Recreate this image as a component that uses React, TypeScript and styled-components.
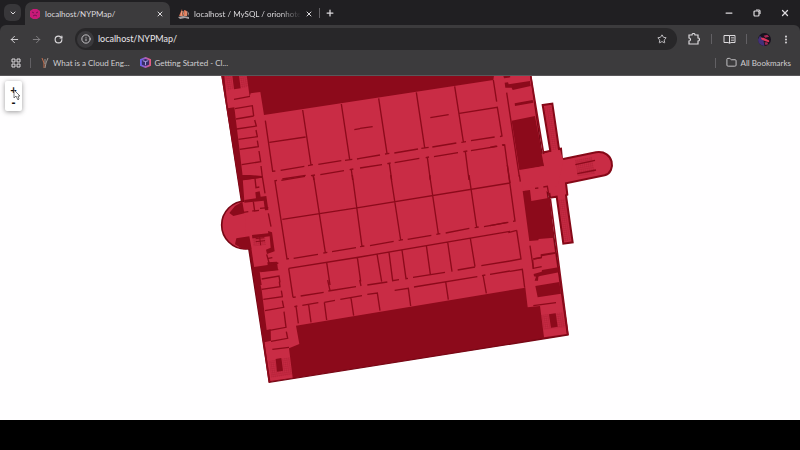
import React from "react";
import styled, { createGlobalStyle } from "styled-components";
import { ArrowLeft, ArrowRight, ChevronDown, Folder, Info, Minus, MoreVertical, Plus, RotateCw, Star, X } from "lucide-react";

const GlobalStyle = createGlobalStyle`
  * { box-sizing: border-box; }
  body { margin: 0; background: #000; font-family: Lato, "Noto Sans", sans-serif; }
  button { font: inherit; border: 0; padding: 0; margin: 0; background: none; color: inherit; }
`;

const Window = styled.div`
  min-height: 100vh;
  display: flex;
  flex-direction: column;
  color: #dcdadd;
`;

const TabStrip = styled.header`
  display: flex;
  align-items: stretch;
  height: 25px;
  padding-left: 4px;
  background: #201f22;
`;

const IconButton = styled.button<{ $size?: number; $dim?: boolean }>`
  flex: none;
  display: flex;
  align-items: center;
  justify-content: center;
  width: ${(p) => p.$size ?? 16}px;
  height: ${(p) => p.$size ?? 16}px;
  color: ${(p) => (p.$dim ? "#858387" : "#dcdadd")};
`;

const TabSearch = styled(IconButton)`
  align-self: center;
  border-radius: 6px;
  background: #38373a;
`;

const Tab = styled.div<{ $active?: boolean }>`
  display: flex;
  align-items: center;
  width: ${(p) => (p.$active ? 145 : 147)}px;
  margin: 2px 0 0 ${(p) => (p.$active ? 4 : 2)}px;
  padding: 0 2px 0 ${(p) => (p.$active ? 4 : 6)}px;
  border-radius: 7px 7px 0 0;
  background: ${(p) => (p.$active ? "#3c3b3d" : "transparent")};
`;

const TabTitle = styled.button<{ $fade?: boolean }>`
  flex: 1;
  min-width: 0;
  margin-left: 4px;
  text-align: left;
  font-size: 8px;
  line-height: 12px;
  white-space: nowrap;
  mask-image: ${(p) => (p.$fade ? "linear-gradient(90deg, #000 80%, transparent)" : "none")};
`;

const Divider = styled.span`
  flex: none;
  align-self: center;
  width: 1px;
  height: 10px;
  background: #626064;
`;

const NewTab = styled(IconButton)`
  align-self: center;
  margin-left: 2px;
`;

const WindowButtons = styled.div`
  display: flex;
  align-items: center;
  gap: 12px;
  margin-left: auto;
  padding-right: 7px;
`;

const ToolbarBack = styled.div`
  background: #201f22;
`;

const Toolbar = styled.div`
  display: flex;
  align-items: center;
  height: 28px;
  padding: 0 9px 0 5px;
  border-radius: 6px 6px 0 0;
  background: #3c3b3d;
`;

const NavButtons = styled.nav`
  display: flex;
  gap: 6px;
  padding-left: 1px;
`;

const AddressBar = styled.div`
  flex: 1;
  display: flex;
  align-items: center;
  height: 22px;
  margin-left: 9px;
  padding: 0 7px 0 2px;
  border-radius: 11px;
  background: #282729;
`;

const SiteInfo = styled(IconButton)`
  border-radius: 50%;
  background: #3a393c;
`;

const Address = styled.input`
  flex: 1;
  min-width: 0;
  margin-left: 4px;
  padding: 0;
  border: 0;
  outline: 0;
  background: none;
  color: #e8e6e9;
  font-family: inherit;
  font-size: 9px;
  line-height: 14px;
`;

const Tools = styled.div`
  display: flex;
  align-items: center;
  gap: 9px;
  padding-left: 9px;
`;

const Bookmarks = styled.div`
  display: flex;
  align-items: center;
  height: 23px;
  padding: 0 9px 3px 8px;
  background: #3c3b3d;
  border-bottom: 1px solid #59575a;
`;

const BookmarkGap = styled.span`
  display: flex;
  margin-left: 6px;
`;

const Bookmark = styled.a`
  display: flex;
  align-items: center;
  gap: 4px;
  margin-left: 10px;
  color: #d0ced1;
  font-size: 8px;
  line-height: 12px;
  white-space: nowrap;
  text-decoration: none;
`;

const BookmarkEnd = styled.div`
  display: flex;
  align-items: center;
  margin-left: auto;
`;

const Page = styled.main`
  position: relative;
  flex: 1;
  overflow: hidden;
  background: #fffeff;
`;

const FloorPlan = styled.svg`
  display: block;
  width: 100%;
  height: auto;
`;

const ZoomBox = styled.div`
  position: absolute;
  top: 5px;
  left: 5px;
  display: flex;
  flex-direction: column;
  width: 17px;
  padding: 2px 0;
  border-radius: 2px;
  background: #fff;
  box-shadow: 0 1px 5px rgba(0, 0, 0, 0.4);
`;

const ZoomButton = styled.button`
  height: 13px;
  color: #111;
  font-family: "DejaVu Sans Mono", monospace;
  font-size: 10px;
  font-weight: 700;
  line-height: 13px;
`;

const Cursor = styled.svg`
  position: absolute;
  top: 13px;
  left: 13px;
  pointer-events: none;
`;

const Taskbar = styled.footer`
  height: 30px;
  background: #000;
`;

const LIGHT = "#c92c45";
const DARK = "#8c0a1b";

const tiles = {
  nw: "translate(645 210)",
  n: "translate(1080 210)",
  ne: "translate(1470 210)",
  w: "translate(645 525)",
  c: "translate(1080 525)",
  e: "translate(1470 525)",
  sw: "translate(645 840)",
  s: "translate(1080 825)",
  se: "translate(1470 780)",
};

const walls: [string, string][] = [
  [tiles.nw, "M57 88L105 79M60 116L112 107L116 138M63 147L116 138M65 177L124 168L119 150M70 208L127 200L123 180M74 238L130 230L127 212M80 284L137 275L132 243M85 328L142 321L138 288M151 152L173 304L181 303M163 217L272 201M263 120L288 285M279 287L294 284M379 102L404 268M197 301L268 289M310 283L379 272M390 271L412 268M426 267L435 265M202 327L272 316M288 317L300 315M316 314L387 302M404 299L415 297M294 317L297 330M409 299L413 330M418 179L435 176"],
  [tiles.n, "M0 175L38 170M56 85L81 250M75 252L88 250M169 67L194 233M184 235L206 232M284 49L310 215M304 217L318 215M400 30L410 95M298 130L412 112L426 198L420 200M211 143L266 134M0 265L60 255M103 249L174 237M217 231L289 219M333 212L404 201M0 294L66 284M104 278L178 265M222 260L294 248M333 242L412 229M82 281L92 279M88 280L95 330M197 263L207 261M202 262L211 330M310 245L322 243M316 244L327 330M428 226L434 225L442 285"],
  [tiles.ne, "M50 68L88 320M162 247L181 243M0 232L20 228M36 225L44 224"],
  [tiles.w, "M178 18L186 16M180 18L216 252L222 251M199 16L270 4M295 0L331 233M325 234L337 232M202 133L435 97M412 0L441 214M435 215L448 213M236 250L309 238M351 230L423 218M221 280L435 246M221 280L234 367M335 262L345 330M427 247L437 320M73 13L142 5L150 55M120 10L123 38L133 36M115 80L119 108L132 106M85 112L100 110M112 108L119 107M135 100L160 98M160 115L168 155M136 290L190 284M140 312L192 303L195 322M155 238L164 270L190 264M160 250L172 248"],
  [tiles.c, "M0 97L450 24M92 0L122 195M116 196L129 194M209 0L235 177M229 178L241 176M327 0L350 157M344 158L356 156M442 -30L450 24M30 212L101 199M143 193L214 181M257 174L328 160M372 155L445 142M0 246L450 169M51 237L65 320M87 232L98 317L117 314M126 225L138 311L144 310M199 211L211 298M159 307L255 292M263 201L276 290M331 190L345 275M293 285L345 276M364 272L450 258M22 330L82 321M366 302L376 300M390 298L450 288"],
  [tiles.e, "M52 -30L75 138L69 139M0 152L52 142M80 166L93 252L60 258M60 289L97 283L104 338M55 173L80 166M120 212L130 280L155 275M130 252L152 248M135 40L145 39M160 36L172 34L177 63M88 0L91 20"],
  [tiles.sw, "M234 52L242 51M257 48L326 37M338 0L345 32M340 33L423 20M434 0L438 18M238 80L247 78M243 78L250 130M262 76L310 68M281 75L288 127M328 67L360 61M328 67L335 120M376 58L441 47M408 54L416 107M140 28L195 20L193 5M145 58L202 50L199 32M150 92L206 82L202 62M160 152L213 142L207 95M168 184L218 175L214 155M172 208L222 202"],
  [tiles.s, "M22 58L52 54L60 107M104 46L145 40L152 93M162 36L352 5M257 20L265 74M369 0L379 55"],
  [tiles.se, "M128 0L130 27M130 137L198 128"],
];

const voids: [string, string][] = [
  [tiles.nw, "M52 17H72L77 55L57 58Z"],
  [tiles.ne, "M40 17H60L61 22L42 25ZM44 38L54 37L56 43L120 33L122 48L68 60L65 53L46 53ZM74 100L128 90L130 98L75 108ZM65 152L135 138L162 288L88 300Z"],
  [tiles.w, "M70 0L105 0L140 3L142 8L75 17ZM88 75L123 70L121 52L134 49L137 65L154 63L160 105L150 106L146 77L88 83ZM43 114L60 93L82 80L88 115L55 123ZM64 190L103 184L110 222L84 223L60 208ZM111 180L160 175L159 168L171 172L179 229L156 237L153 224L167 218L164 184L112 190ZM115 276L158 270L157 262L186 260L189 284L134 290L140 330L122 330Z"],
  [tiles.e, "M98 48L120 45L124 78L180 68L192 188L146 192L145 196L118 198ZM130 250L152 246V238L195 231L197 236L156 244V250L130 254Z"],
  [tiles.se, "M131 42L155 35L156 30L205 22L207 37L150 48L145 50L144 62L134 62L138 50L132 49ZM136 78L208 66L213 101L143 112Z"],
];

const stairs: [string, string][] = [
  [tiles.nw, "M29 17H50L56 56L37 62ZM73 17H94L100 50L79 55Z"],
  [tiles.ne, "M163 110L183 107L204 238L183 241ZM255 270L305 261L315 311L263 319Z"],
  [tiles.e, "M204 75L228 70L244 195L222 201Z"],
  [tiles.w, "M112 186L150 183L153 210L115 214Z"],
  [tiles.sw, "M162 243L225 232L231 284L169 293Z"],
  [tiles.se, "M153 165L218 157L226 202L160 210Z"],
];

function Building() {
  return (
    <FloorPlan viewBox="0 228 2400 1032" role="img" aria-label="Floor plan">
      <defs>
        <pattern id="steps" width="6" height="6" patternUnits="userSpaceOnUse" patternTransform="rotate(-9)">
          <path d="M0 1H6M2 0V6" stroke={DARK} strokeWidth="1" opacity="0.6" />
        </pattern>
      </defs>
      <path d="M666 226L808 1147L1704 1005L1592 226Z" fill={DARK} stroke="#780715" strokeWidth="4" />
      <circle cx="737" cy="675" r="72" fill={LIGHT} stroke="#780715" strokeWidth="5" />
      <path
        transform={tiles.ne}
        d="M158 105L187 101L207 237L213 236L216 268L318 247C372 239 380 306 344 316L228 340L232 374L228 376L248 517L220 521L200 380L180 383L160 247L181 243Z"
        fill={LIGHT}
        stroke="#850817"
        strokeWidth="6"
      />
      <path
        d="M673 226L683 325L703 322L727 520L733 604L740 745L752 747L762 804L772 812L785 870L800 990L812 988L813 1022L793 1027L811 1143L878 1133L867 1045L898 1032L888 977L1576 863L1583 922L1620 918L1632 1012L1700 1002L1590 226H1482L1480 240L792 345L781 276L752 280L749 290L740 226Z"
        fill={LIGHT}
      />
      {voids.map(([place, d]) => <path key={place} transform={place} d={d} fill={DARK} />)}
      <path transform={tiles.ne} d="M155 252L210 240L220 270L205 342L180 370L140 348L100 362L90 302L162 288Z" fill={LIGHT} />
      {stairs.map(([place, d]) => <path key={place} transform={place} d={d} fill="url(#steps)" />)}
      <path transform={tiles.sw} d="M182 237L199 234L204 272L186 275Z" fill={DARK} />
      <path transform={tiles.se} d="M177 163L197 160L203 200L183 203Z" fill={DARK} />
      <path transform={tiles.ne} d="M256 284L315 271M262 311L318 300" fill="none" stroke={DARK} strokeWidth="4" />
      <path transform={tiles.w} d="M122 191L148 188M122 200L150 197M134 186L137 211" fill="none" stroke={DARK} strokeWidth="3" />
      {walls.map(([place, d]) => <path key={place} transform={place} d={d} fill="none" stroke={DARK} strokeWidth="4" />)}
      <path d="M1592 226L1631 462M1651 596L1704 1005M666 226L727 605M752 747L808 1147" fill="none" stroke={DARK} strokeWidth="5" />
    </FloorPlan>
  );
}

const MapIcon = () => (
  <svg width="12" height="12" viewBox="0 0 12 12" aria-hidden="true">
    <path d="M4 1H8L11 3V9L8 11H4L1 9V3Z" fill="#c91a78" />
    <path d="M3 4L5 5M7 5L9 4M4 8L6 7L8 8" stroke="#761454" fill="none" />
  </svg>
);

const DatabaseIcon = () => (
  <svg width="12" height="12" viewBox="0 0 12 12" aria-hidden="true">
    <path d="M4 1L1 8H5ZM6 2C9 2 10 5 9 8H6Z" fill="#d86c4c" />
    <path d="M0 9L5 8L11 9V11L7 10L2 11ZM9 3C11 4 11 6 11 8" fill="#a7a1a3" />
    <path d="M4 3L3 8M5 3L6 8M8 3L8 8" stroke="#f3c2a4" strokeWidth="0.7" />
  </svg>
);

const CareerIcon = () => (
  <svg width="8" height="12" viewBox="0 0 8 12" aria-hidden="true">
    <path d="M1 1L3 6V11" stroke="#c8704d" fill="none" />
    <path d="M7 1L5 6L4 11M4 2V7" stroke="#9d9490" fill="none" />
  </svg>
);

const CubeIcon = () => (
  <svg width="11" height="11" viewBox="0 0 12 12" aria-hidden="true">
    <defs>
      <linearGradient id="cube"><stop stopColor="#6a62f0" /><stop offset="1" stopColor="#e35b83" /></linearGradient>
    </defs>
    <path d="M6 1L11 3V9L6 11L1 9V3Z" fill="#372e68" stroke="url(#cube)" strokeWidth="2" />
    <path d="M3 4L6 5L9 4M6 5V9" fill="none" stroke="#b6a9ed" />
  </svg>
);

const RestoreIcon = () => (
  <svg width="8" height="8" viewBox="0 0 8 8" fill="none" stroke="currentColor" strokeWidth="1.2" aria-hidden="true">
    <rect x="1" y="2" width="5" height="5" rx="1" />
    <path d="M3 1H6Q7 1 7 2V5" />
  </svg>
);

const AppsIcon = () => (
  <svg width="10" height="10" viewBox="0 0 10 10" fill="none" stroke="currentColor" aria-hidden="true">
    <path d="M1 1H4V4H1ZM6 1H9V4H6ZM1 6H4V9H1ZM6 6H9V9H6Z" />
  </svg>
);

const ExtensionIcon = () => (
  <svg width="12" height="12" viewBox="0 0 12 12" fill="none" stroke="currentColor" strokeWidth="1.2" aria-hidden="true">
    <path d="M1 2H4C4 0 7 0 7 2H10V5C12 5 12 8 10 8V11H1V8C3 8 3 5 1 5Z" />
  </svg>
);

const ReaderIcon = () => (
  <svg width="13" height="10" viewBox="0 0 13 10" fill="none" stroke="currentColor" aria-hidden="true">
    <path d="M6.5 1.5H1V8.5H5L6.5 9.3L8 8.5H12V1.5ZM6.5 1.5V9" />
    <path d="M8 3.5H11M8 5H11M8 6.5H11" strokeWidth="0.6" />
  </svg>
);

const Avatar = () => (
  <svg width="13" height="13" viewBox="0 0 14 14" aria-hidden="true">
    <circle cx="7" cy="7" r="7" fill="#17121e" />
    <path d="M2 3Q5 5 6 8L7 14Q0 13 0 7Z" fill="#443079" />
    <path d="M3 5L6 5L12 8L12 10L8 9L4 7Z" fill="#e2365d" />
    <path d="M6 3L10 2L12 4L8 5ZM7 10L10 10L11 12L8 13Z" fill="#a42953" />
  </svg>
);

export default function App() {
  return (
    <Window>
      <GlobalStyle />
      <TabStrip>
        <TabSearch $size={17} aria-label="Search tabs"><ChevronDown size={8} strokeWidth={3} /></TabSearch>
        <Tab $active>
          <MapIcon />
          <TabTitle>localhost/NYPMap/</TabTitle>
          <IconButton aria-label="Close tab"><X size={8} strokeWidth={3} /></IconButton>
        </Tab>
        <Tab>
          <DatabaseIcon />
          <TabTitle $fade>localhost / MySQL / orionhotel</TabTitle>
          <IconButton aria-label="Close tab"><X size={8} strokeWidth={3} /></IconButton>
        </Tab>
        <Divider />
        <NewTab aria-label="New tab"><Plus size={10} strokeWidth={3} /></NewTab>
        <WindowButtons>
          <IconButton aria-label="Minimize"><Minus size={10} strokeWidth={3} /></IconButton>
          <IconButton aria-label="Restore"><RestoreIcon /></IconButton>
          <IconButton aria-label="Close"><X size={10} strokeWidth={3} /></IconButton>
        </WindowButtons>
      </TabStrip>
      <ToolbarBack>
        <Toolbar>
          <NavButtons>
            <IconButton aria-label="Back"><ArrowLeft size={11} /></IconButton>
            <IconButton $dim aria-label="Forward"><ArrowRight size={11} /></IconButton>
            <IconButton aria-label="Reload"><RotateCw size={9} strokeWidth={3} /></IconButton>
          </NavButtons>
          <AddressBar>
            <SiteInfo $size={17} aria-label="Site information"><Info size={10} /></SiteInfo>
            <Address aria-label="Address" defaultValue="localhost/NYPMap/" />
            <IconButton aria-label="Bookmark this page"><Star size={10} /></IconButton>
          </AddressBar>
          <Tools>
            <IconButton aria-label="Extensions"><ExtensionIcon /></IconButton>
            <Divider />
            <IconButton aria-label="Reading mode"><ReaderIcon /></IconButton>
            <Divider />
            <IconButton aria-label="Profile"><Avatar /></IconButton>
            <IconButton $size={10} aria-label="Menu"><MoreVertical size={11} strokeWidth={3} /></IconButton>
          </Tools>
        </Toolbar>
      </ToolbarBack>
      <Bookmarks>
        <IconButton aria-label="Apps"><AppsIcon /></IconButton>
        <BookmarkGap><Divider /></BookmarkGap>
        <Bookmark href="#engineer"><CareerIcon />What is a Cloud Eng...</Bookmark>
        <Bookmark href="#started"><CubeIcon />Getting Started - Cl...</Bookmark>
        <BookmarkEnd>
          <Divider />
          <Bookmark href="#all"><Folder size={11} />All Bookmarks</Bookmark>
        </BookmarkEnd>
      </Bookmarks>
      <Page>
        <Building />
        <ZoomBox>
          <ZoomButton aria-label="Zoom in">+</ZoomButton>
          <ZoomButton aria-label="Zoom out">-</ZoomButton>
        </ZoomBox>
        <Cursor width="8" height="12" viewBox="0 0 8 12" aria-hidden="true">
          <path d="M1 1V9L3 7L5 11L6 10L5 7H7Z" fill="#fff" stroke="#555" strokeWidth="0.8" />
        </Cursor>
      </Page>
      <Taskbar />
    </Window>
  );
}
